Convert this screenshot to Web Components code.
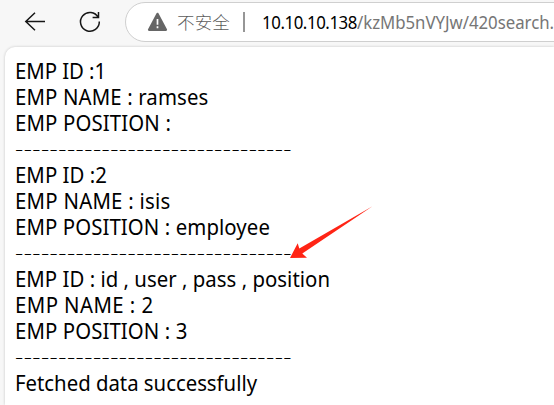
<!DOCTYPE html>
<html lang="zh-CN">
<head>
<meta charset="utf-8">
<title>420search</title>
<style>
html,body{margin:0;height:100%;overflow:hidden;background:#f7f7f7}
body{font-family:"Noto Sans","Open Sans","Noto Sans CJK SC",sans-serif}
</style>
</head>
<body>
<browser-window></browser-window>
<script>
// Single text run whose tracking adapts to a given advance width.
class FitText extends HTMLElement {
  connectedCallback() {
    const root = this.attachShadow({mode: 'open'});
    root.innerHTML = `<style>:host{display:block;white-space:pre}span{display:inline-block;transform-origin:0 50%}</style><span></span>`;
    const span = root.querySelector('span');
    const text = this.getAttribute('text');
    const stretch = Number(this.getAttribute('stretch') || 1);
    span.textContent = text;
    const natural = span.getBoundingClientRect().width;
    span.style.letterSpacing = ((Number(this.getAttribute('width')) / stretch - natural) / text.length) + 'px';
    if (stretch !== 1) span.style.transform = `scaleX(${stretch})`;
  }
}
customElements.define('fit-text', FitText);

class AddressBar extends HTMLElement {
  constructor() {
    super();
    this.attachShadow({mode: 'open'}).innerHTML = `<style>
      :host{display:flex;box-sizing:border-box;align-items:center;height:40px;width:460px;flex:none;
        border:1px solid #cfcfcf;border-radius:20px;background:#fff;padding-left:21px;font-size:17.5px;line-height:24px;color:#767676}
      svg{flex:none;margin-top:-1px}
      .state{font-family:"Noto Sans CJK SC",sans-serif;font-weight:300;color:#5c5c5c;margin-left:9px;width:54px}
      .bar{width:2px;height:20px;background:#969696;margin:0 17px 0 12px}
      .host{color:#000;width:95px}
    </style>
    <svg width="21" height="20" viewBox="0 0 21 20"><path d="M10.5 1.8 19 17.8H2Z" fill="#666" stroke="#666" stroke-width="2.2" stroke-linejoin="round"/><path d="M10.5 7v5.7M10.5 14.2v2" stroke="#fff" stroke-width="1.7"/></svg>
    <fit-text class="state" text="不安全" width="53"></fit-text>
    <span class="bar"></span>
    <fit-text class="host" text="10.10.10.138" width="95" stretch="0.96"></fit-text>
    <fit-text text="/kzMb5nVYJw/420search." width="197" stretch="0.96"></fit-text>`;
  }
}
customElements.define('address-bar', AddressBar);

class BrowserToolbar extends HTMLElement {
  constructor() {
    super();
    this.attachShadow({mode: 'open'}).innerHTML = `<style>
      :host{display:flex;height:47px;padding-top:2px;box-sizing:border-box}
      svg{flex:none;fill:none;stroke:#161616;stroke-width:1.5}
    </style>
    <svg width="125" height="40" viewBox="0 2 125 40"><path d="M45 21.5H26M35 12.8 25.8 21.5 35 30.2"/><path d="M98.2 17.4A9.4 9.4 0 1 0 99.3 21.5M98.5 12V17.5H92.6"/></svg>
    <address-bar></address-bar>`;
  }
}
customElements.define('browser-toolbar', BrowserToolbar);

class EmployeeResults extends HTMLElement {
  constructor() {
    super();
    const rule = '-'.repeat(32);
    const lines = [
      ['EMP ID :1', 91], ['EMP NAME : ramses', 193.5], ['EMP POSITION :', 156], [rule, 277],
      ['EMP ID :2', 92], ['EMP NAME : isis', 155.5], ['EMP POSITION : employee', 255], [rule, 277],
      ['EMP ID : id , user , pass , position', 315], ['EMP NAME : 2', 138.5], ['EMP POSITION : 3', 172.5], [rule, 277],
      ['Fetched data successfully', 242]
    ];
    this.attachShadow({mode: 'open'}).innerHTML = `<style>
      :host{display:block;flex:1;margin-left:5px;padding:11px 0 0 10px;background:#fff;
        border-top-left-radius:10px;box-shadow:0 0 3px #0003;font-size:21px;line-height:26px;color:#000}
      fit-text{height:26px}
      .rule{font-size:18px;font-weight:300;line-height:25px}
    </style>` + lines.map(([t, w]) => `<fit-text ${t === rule ? 'class="rule" stretch="1.42"' : 'stretch="0.97"'} text="${t}" width="${w}"></fit-text>`).join('');
  }
}
customElements.define('employee-results', EmployeeResults);

class PointerArrow extends HTMLElement {
  constructor() {
    super();
    this.attachShadow({mode: 'open'}).innerHTML = `<style>
      :host{position:absolute;left:288px;top:204px;width:86px;height:56px}svg{display:block}
    </style><svg width="86" height="56" viewBox="288 204 86 56"><path d="M372.5 206.3 302.3 253.6 307 257.8 290 258 297.7 243.2 299.3 248.6Z" fill="#ff2415"/></svg>`;
  }
}
customElements.define('pointer-arrow', PointerArrow);

class BrowserWindow extends HTMLElement {
  constructor() {
    super();
    this.attachShadow({mode: 'open'}).innerHTML = `<style>
      :host{display:flex;flex-direction:column;position:relative;width:554px;height:405px;overflow:hidden;background:#f7f7f7}
    </style><browser-toolbar></browser-toolbar><employee-results></employee-results><pointer-arrow></pointer-arrow>`;
  }
}
customElements.define('browser-window', BrowserWindow);
</script>
</body>
</html>
